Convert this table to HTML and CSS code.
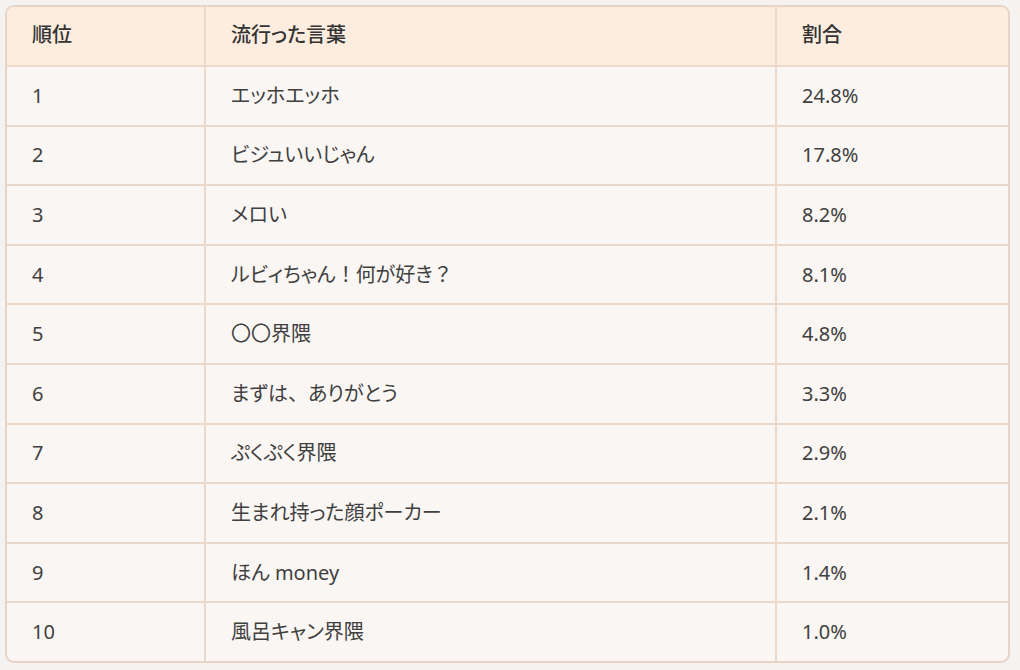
FILE: index.html
```html
<!DOCTYPE html>
<html lang="ja">
<head>
<meta charset="utf-8">
<title>流行った言葉</title>
<link rel="stylesheet" href="styles.css">
</head>
<body>
<div class="table-wrap">
  <table class="ranking">
    <colgroup>
      <col class="c-rank">
      <col class="c-word">
      <col class="c-pct">
    </colgroup>
    <thead>
      <tr><th>順位</th><th>流行った言葉</th><th>割合</th></tr>
    </thead>
    <tbody>
      <tr><td>1</td><td>エッホエッホ</td><td>24.8%</td></tr>
      <tr><td>2</td><td>ビジュいいじゃん</td><td>17.8%</td></tr>
      <tr><td>3</td><td>メロい</td><td>8.2%</td></tr>
      <tr><td>4</td><td>ルビィちゃん<span class="punct">！</span>何が好き<span class="punct">？</span></td><td>8.1%</td></tr>
      <tr><td>5</td><td>〇〇界隈</td><td>4.8%</td></tr>
      <tr><td>6</td><td>まずは<span class="punct">、</span>ありがとう</td><td>3.3%</td></tr>
      <tr><td>7</td><td>ぷくぷく界隈</td><td>2.9%</td></tr>
      <tr><td>8</td><td>生まれ持った顔ポーカー</td><td>2.1%</td></tr>
      <tr><td>9</td><td>ほん money</td><td>1.4%</td></tr>
      <tr><td>10</td><td>風呂キャン界隈</td><td>1.0%</td></tr>
    </tbody>
  </table>
</div>
</body>
</html>
```

FILE: styles.css
```css
html, body {
  margin: 0;
  padding: 0;
  background: #f5f3f1;
}
body {
  padding: 5px 10px 0 5px;
  font-family: "Noto Sans", "Noto Sans CJK JP", sans-serif;
  color: #3a3a3a;
}
.table-wrap {
  width: 1005px;
  box-sizing: border-box;
  border: 2px solid #e8d3c5;
  border-radius: 9px;
  overflow: hidden;
  background: #faf6f3;
}
.ranking {
  width: 100%;
  border-collapse: collapse;
  table-layout: fixed;
  font-size: 20px;
  font-feature-settings: "palt" 1;
}
.punct {
  font-feature-settings: normal;
}
.c-rank { width: 198px; }
.c-word { width: 571px; }
.ranking th,
.ranking td {
  text-align: left;
  padding: 0 0 0 25px;
  border-right: 2px solid #ead8cb;
  border-bottom: 2px solid #ead8cb;
  font-weight: normal;
  line-height: 1;
}
.ranking th:last-child,
.ranking td:last-child { border-right: none; }
.ranking tbody tr:last-child td { border-bottom: none; }
.ranking thead th {
  background: #fdeddf;
  color: #333;
  font-weight: 500;
  height: 56px;
  padding-bottom: 2px;
}
.ranking tbody td {
  height: 57.6px;
  color: #404040;
}
```
